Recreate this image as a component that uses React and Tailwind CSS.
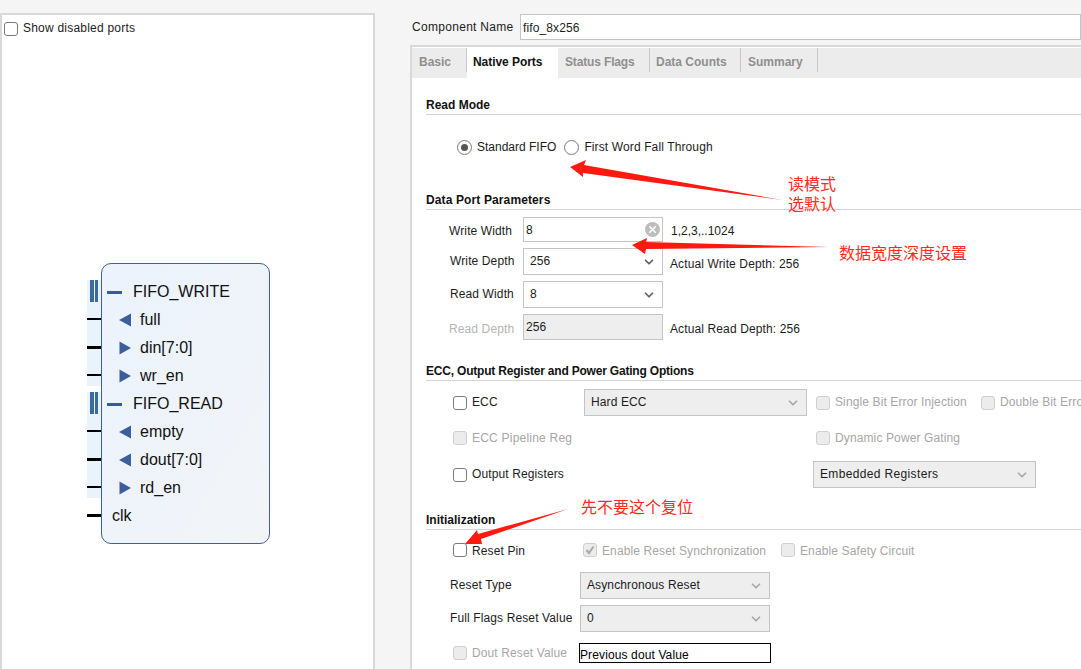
import React from "react";
import { ChevronDown, X } from "lucide-react";

function Check({ disabled, checked, label, className = "", labelClass = "" }) {
  return (
    <div className={`flex shrink-0 items-center gap-[5px] whitespace-nowrap ${className}`}>
      <div
        className={`flex h-[14px] w-[14px] shrink-0 items-center justify-center rounded-[3px] border ${
          disabled ? "border-[#cfcfcf] bg-[#ececec]" : "border-[#7a7a7a] bg-white"
        }`}
      >
        {checked && (
          <svg width="10" height="10" viewBox="0 0 10 10">
            <path d="M1.5 5 L4 8 L8.5 1.5" fill="none" stroke="#a9a9a9" strokeWidth="2" />
          </svg>
        )}
      </div>
      <span className={`${disabled ? "text-[#a6a6a6]" : "text-[#1c1c1c]"} ${labelClass}`}>{label}</span>
    </div>
  );
}

function Select({ value, disabled, className = "", valueClass = "" }) {
  return (
    <div
      className={`flex shrink-0 items-center justify-between border border-[#c4c4c4] pl-[6px] pr-[6px] ${
        disabled ? "bg-[#eeeeee]" : "bg-white"
      } ${className}`}
    >
      <span className={`pb-[2px] text-[#1c1c1c] ${valueClass}`}>{value}</span>
      <ChevronDown size={14} strokeWidth={3} className={disabled ? "text-[#a8a8a8]" : "text-[#606060]"} />
    </div>
  );
}

function Heading({ children, className = "" }) {
  return (
    <div className={`h-[20px] border-b border-[#d4d4d4] font-bold leading-[20px] text-[#111] ${className}`}>
      {children}
    </div>
  );
}

function Radio({ on, label, labelClass = "" }) {
  return (
    <div className="flex items-center gap-[5px] whitespace-nowrap">
      <div className="flex h-[15px] w-[15px] items-center justify-center rounded-full border border-[#7a7a7a] bg-white">
        {on && <div className="h-[7px] w-[7px] rounded-full bg-[#555]" />}
      </div>
      <span className={`text-[#1c1c1c] ${labelClass}`}>{label}</span>
    </div>
  );
}

function Triangle({ dir }) {
  return (
    <svg width="12" height="14" viewBox="0 0 12 14" className="shrink-0">
      <path d={dir === "in" ? "M0.5 0.5 L12 7 L0.5 13.5 Z" : "M12 0.5 L0 7 L12 13.5 Z"} fill="#3c5f9c" />
    </svg>
  );
}

function Pin({ bus }) {
  return (
    <div className="flex h-[28px] items-center">
      <div className={`w-[14px] bg-black ${bus ? "h-[3px]" : "h-[2px]"}`} />
    </div>
  );
}

function BusMark() {
  return (
    <div className="flex h-[22px] gap-[1px] pl-[3px]">
      <div className="w-[4px] bg-[#3a6a9e]" />
      <div className="w-[3px] bg-[#3a6a9e]" />
    </div>
  );
}

function PinGroup({ pins }) {
  return (
    <div className="h-[106px] bg-[#eaf2fb]">
      <BusMark />
      <div className="mt-[3px]">
        {pins.map((bus, i) => (
          <Pin key={i} bus={bus} />
        ))}
      </div>
    </div>
  );
}

function GroupRow({ label }) {
  return (
    <div className="flex h-[28px] items-center pl-[5px]">
      <div className="h-[3px] w-[15px] bg-[#3a5a94]" />
      <span className="ml-[11px]">{label}</span>
    </div>
  );
}

function PortRow({ dir, label }) {
  return (
    <div className="flex h-[28px] items-center pl-[17px]">
      <Triangle dir={dir} />
      <span className="ml-[9px]">{label}</span>
    </div>
  );
}

function Diagram() {
  return (
    <div className="ml-[85px] mt-[224px] flex text-[16px] tracking-normal text-[#111]">
      <div className="w-[14px] pt-[17px]">
        <PinGroup pins={[false, true, false]} />
        <div className="mt-[6px]">
          <PinGroup pins={[false, true, false]} />
        </div>
        <div className="mt-[3px]">
          <Pin bus />
        </div>
      </div>
      <div className="h-[281px] w-[169px] rounded-[10px] border border-[#3f5f9f] bg-gradient-to-br from-[#ebf3fd] to-[#f2f4f7] pt-[14px]">
        <GroupRow label="FIFO_WRITE" />
        <PortRow dir="out" label="full" />
        <PortRow dir="in" label="din[7:0]" />
        <PortRow dir="in" label="wr_en" />
        <GroupRow label="FIFO_READ" />
        <PortRow dir="out" label="empty" />
        <PortRow dir="out" label="dout[7:0]" />
        <PortRow dir="in" label="rd_en" />
        <div className="flex h-[28px] items-center pl-[10px]">clk</div>
      </div>
    </div>
  );
}

const tabs = [
  { name: "Basic", w: "w-[55px] pl-[7px] tracking-normal" },
  { name: "Native Ports", w: "w-[91px] pl-[6px] tracking-[-0.05px]", active: true },
  { name: "Status Flags", w: "w-[92px] pl-[7px] tracking-[-0.15px]" },
  { name: "Data Counts", w: "w-[91px] pl-[6px] tracking-normal" },
  { name: "Summary", w: "w-[77px] pl-[7px] tracking-normal" },
];

function Annotations() {
  return (
    <>
      <svg width="1081" height="669" className="pointer-events-none absolute left-0 top-0">
        <polygon points="570,167 586,160 584,165 782,200 583,173 583,177" fill="#ff1a0f" />
        <polygon points="632,245 647,238 646,242 829,247 646,249 645,254" fill="#ff1a0f" />
        <polygon points="465,544 477,530 478,534 568,509 481,539 482,544" fill="#ff1a0f" />
      </svg>
      <div className="absolute left-[788px] top-[175px] text-[16px] leading-[20px] tracking-normal text-[#ff2a1a]">
        读模式
        <br />
        选默认
      </div>
      <div className="absolute left-[839px] top-[244px] text-[16px] leading-[20px] tracking-normal text-[#ff2a1a]">数据宽度深度设置</div>
      <div className="absolute left-[581px] top-[498px] text-[16px] leading-[20px] tracking-normal text-[#ff2a1a]">先不要这个复位</div>
    </>
  );
}

export default function App() {
  return (
    <div className="relative flex h-[669px] w-[1081px] overflow-hidden bg-[#f5f5f5] pt-[13px] font-['Liberation_Sans','Noto_Sans_CJK_SC',sans-serif] text-[12px] tracking-[0.12px] text-[#1c1c1c]">
      {/* left: symbol view */}
      <div className="h-[700px] w-[375px] shrink-0 border-2 border-[#d9d9d9] bg-white">
        <Check label="Show disabled ports" className="ml-[2px] mt-[4px]" labelClass="pb-[2px] tracking-[0.22px]" />
        <Diagram />
      </div>

      {/* right: customize panel */}
      <div className="ml-[35px] w-[671px] shrink-0 pt-px">
        <div className="flex h-[26px] items-center">
          <span className="ml-[2px] w-[108px] whitespace-nowrap tracking-[0.3px]">Component Name</span>
          <div className="flex h-[26px] flex-1 items-center border border-[#c4c4c4] bg-white pl-[2px] pt-[2px]">fifo_8x256</div>
        </div>

        <div className="mt-[5px] h-[700px] border-l-2 border-t-2 border-[#d9d9d9] bg-white">
          <div className="mt-px flex h-[30px] items-start bg-[#ececec]">
            {tabs.map((t) => (
              <div
                key={t.name}
                className={`whitespace-nowrap font-bold leading-[28px] ${t.w} ${
                  t.active ? "h-[30px] bg-white text-[#111]" : "h-[24px] border-r border-[#c8c8c8] text-[#8f8f8f]"
                }`}
              >
                {t.name}
              </div>
            ))}
          </div>

          <div className="pl-[14px] pt-[17px]">
            <Heading className="tracking-normal">Read Mode</Heading>
            <div className="ml-[31px] mt-[20px] flex h-[24px] items-center gap-[8px]">
              <Radio on label="Standard FIFO" labelClass="tracking-normal" />
              <Radio label="First Word Fall Through" />
            </div>

            <Heading className="mt-[31px]">Data Port Parameters</Heading>
            <div className="mt-[7px] flex h-[25px] items-center pl-[23px]">
              <span className="w-[74px] pt-[2px]">Write Width</span>
              <div className="flex h-[25px] w-[140px] items-center justify-between border border-[#c4c4c4] bg-white pl-[2px] pr-[2px]">
                <span>8</span>
                <div className="flex h-[15px] w-[15px] items-center justify-center rounded-full bg-[#bdbdbd]">
                  <X size={11} strokeWidth={3.5} className="text-white" />
                </div>
              </div>
              <span className="ml-[8px] pt-[2px] tracking-normal">1,2,3,..1024</span>
            </div>
            <div className="mt-[6px] flex h-[27px] items-center pl-[24px]">
              <span className="w-[73px] pb-[2px]">Write Depth</span>
              <Select value="256" className="h-[27px] w-[140px]" />
              <span className="ml-[7px] mt-[5px]">Actual Write Depth: 256</span>
            </div>
            <div className="mt-[6px] flex h-[27px] items-center pl-[24px]">
              <span className="w-[73px] pb-[2px]">Read Width</span>
              <Select value="8" className="h-[27px] w-[140px]" />
            </div>
            <div className="mt-[6px] flex h-[26px] items-center pl-[23px]">
              <span className="w-[74px] pt-[4px] text-[#b4b4b4]">Read Depth</span>
              <div className="flex h-[26px] w-[140px] items-center border border-[#c4c4c4] bg-[#eeeeee] pl-[2px]">256</div>
              <span className="ml-[7px] pt-[4px]">Actual Read Depth: 256</span>
            </div>

            <Heading className="mt-[21px] tracking-[-0.2px]">ECC, Output Register and Power Gating Options</Heading>
            <div className="mt-[8px] flex h-[27px] items-center pl-[27px]">
              <Check label="ECC" className="w-[131px]" labelClass="pb-[2px]" />
              <Select disabled value="Hard ECC" className="h-[27px] w-[223px]" />
              <Check disabled label="Single Bit Error Injection" className="ml-[9px] w-[165px]" labelClass="pb-[2px]" />
              <Check disabled label="Double Bit Error Injection" labelClass="pb-[2px]" />
            </div>
            <div className="mt-[10px] flex h-[24px] items-center pl-[27px]">
              <Check disabled label="ECC Pipeline Reg" className="w-[363px]" labelClass="tracking-[0.22px]" />
              <Check disabled label="Dynamic Power Gating" />
            </div>
            <div className="mt-[11px] flex h-[27px] items-center pl-[27px]">
              <Check label="Output Registers" className="w-[360px]" labelClass="pb-[2px]" />
              <Select disabled value="Embedded Registers" className="h-[27px] w-[223px]" valueClass="tracking-[0.35px]" />
            </div>

            <Heading className="mt-[22px] tracking-normal">Initialization</Heading>
            <div className="mt-[8px] flex h-[24px] items-center pl-[27px]">
              <Check label="Reset Pin" className="w-[130px]" labelClass="pt-[2px]" />
              <Check disabled checked label="Enable Reset Synchronization" className="w-[198px]" labelClass="pt-[2px]" />
              <Check disabled label="Enable Safety Circuit" labelClass="pt-[2px]" />
            </div>
            <div className="mt-[10px] flex h-[27px] items-center pl-[24px]">
              <span className="w-[130px] pb-[2px]">Reset Type</span>
              <Select disabled value="Asynchronous Reset" className="h-[27px] w-[190px]" />
            </div>
            <div className="mt-[6px] flex h-[27px] items-center pl-[24px]">
              <span className="w-[130px] whitespace-nowrap pb-[2px]">Full Flags Reset Value</span>
              <Select disabled value="0" className="h-[27px] w-[190px]" />
            </div>
            <div className="mt-[11px] flex h-[20px] items-center pl-[27px]">
              <Check disabled label="Dout Reset Value" className="w-[126px]" />
              <div className="flex h-[20px] w-[192px] items-center border border-black bg-white pt-[3px] text-black">
                Previous dout Value
              </div>
            </div>
          </div>
        </div>
      </div>

      <Annotations />
    </div>
  );
}
